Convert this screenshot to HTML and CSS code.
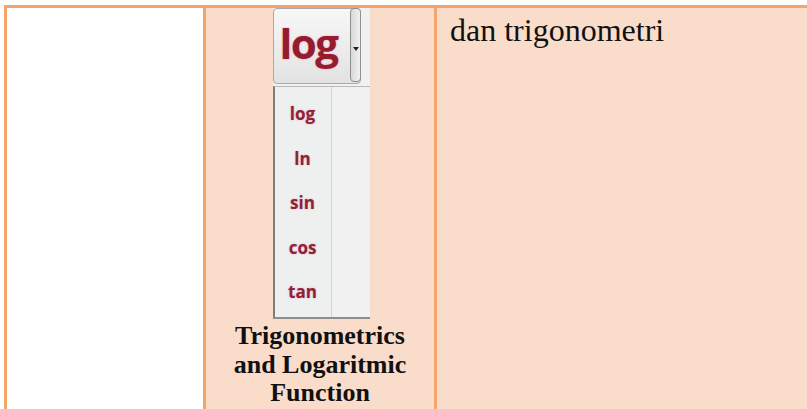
FILE: index.html
```html
<!DOCTYPE html>
<html lang="en">
<head>
    <meta charset="UTF-8">
    <meta name="viewport" content="width=device-width, initial-scale=1.0">
    <title>Trigonometrics and Logaritmic Function</title>
    <link rel="stylesheet" href="styles.css">
</head>
<body>
    <div class="table">
        <div class="cell cell-blank"></div>

        <div class="cell cell-widget">
            <div class="widget">
                <div class="widget-top">
                    <div class="func-button">
                        <span class="func-label">log</span>
                        <span class="func-arrow"></span>
                    </div>
                </div>
                <div class="func-list">
                    <ul class="func-items">
                        <li>log</li>
                        <li>ln</li>
                        <li>sin</li>
                        <li>cos</li>
                        <li>tan</li>
                    </ul>
                    <div class="func-rest"></div>
                </div>
            </div>
            <p class="caption">Trigonometrics and Logaritmic Function</p>
        </div>

        <div class="cell cell-text">
            <p class="desc">dan trigonometri</p>
        </div>
    </div>
</body>
</html>
```

FILE: styles.css
```css
html, body {
    height: 409px;
}
body {
    margin: 0;
    background: #fff;
    overflow: hidden;
    font-family: "Liberation Serif", "Times New Roman", serif;
}
.table {
    box-sizing: border-box;
    display: grid;
    grid-template-columns: 196px 228px 1fr;
    gap: 3px;
    padding: 3px 0 0 3px;
    margin: 5px 0 0 4px;
    height: 404px;
    background: #f5a46b;
}
.cell {
    background: #fadccb;
    overflow: hidden;
}
.cell-blank {
    background: #fff;
}
.cell-widget {
    display: flex;
    flex-direction: column;
    align-items: center;
}
.widget {
    width: 97px;
    margin-left: 2px;
    background: #f1f1f1;
}
.widget-top {
    height: 78px;
}
.func-button {
    position: relative;
    width: 86px;
    height: 74px;
    border: 1px solid #a9a9a9;
    border-radius: 4px;
    background: linear-gradient(#f7f7f7, #ebebeb 60%, #e2e2e2);
    font-family: "Open Sans", "Noto Sans", sans-serif;
}
.func-label {
    position: absolute;
    left: 6px;
    top: 6px;
    font-size: 42px;
    font-weight: 700;
    line-height: 56px;
    letter-spacing: -1.5px;
    color: #951c30;
    text-shadow: 0 0 2px rgba(240, 80, 120, 0.55);
}
.func-arrow {
    position: absolute;
    right: -1px;
    top: -1px;
    width: 9px;
    height: 72px;
    border: 1px solid #8f8f8f;
    border-radius: 4px;
    background: linear-gradient(90deg, #d8d8d8, #f2f2f2);
}
.func-arrow::after {
    content: "";
    position: absolute;
    right: 1px;
    top: 38px;
    border-top: 4px solid #222;
    border-left: 3px solid transparent;
    border-right: 3px solid transparent;
}
.func-list {
    display: flex;
    height: 230px;
    border-top: 1px solid #b9b9b9;
    border-left: 2px solid #7d7d7d;
    border-bottom: 2px solid #8d8d8d;
}
.func-items {
    list-style: none;
    margin: 0;
    padding: 5px 0 0;
    width: 56px;
    background: #eef0f0;
    border-right: 1px solid #d2d2d2;
    font-family: "Open Sans", "Noto Sans", sans-serif;
}
.func-items li {
    height: 44.5px;
    line-height: 44px;
    text-align: center;
    font-size: 17px;
    font-weight: 700;
    color: #8c2338;
    text-shadow: 0 0 2px rgba(240, 90, 130, 0.5);
}
.func-rest {
    flex: 1;
    background: #f1f1f1;
}
.caption {
    margin: 3px 0 0;
    width: 200px;
    text-align: center;
    font-size: 26px;
    font-weight: 700;
    line-height: 28.5px;
    color: #111;
}
.desc {
    margin: 0;
    padding: 4px 0 0 13px;
    font-size: 32px;
    line-height: 36px;
    color: #111;
}
```
